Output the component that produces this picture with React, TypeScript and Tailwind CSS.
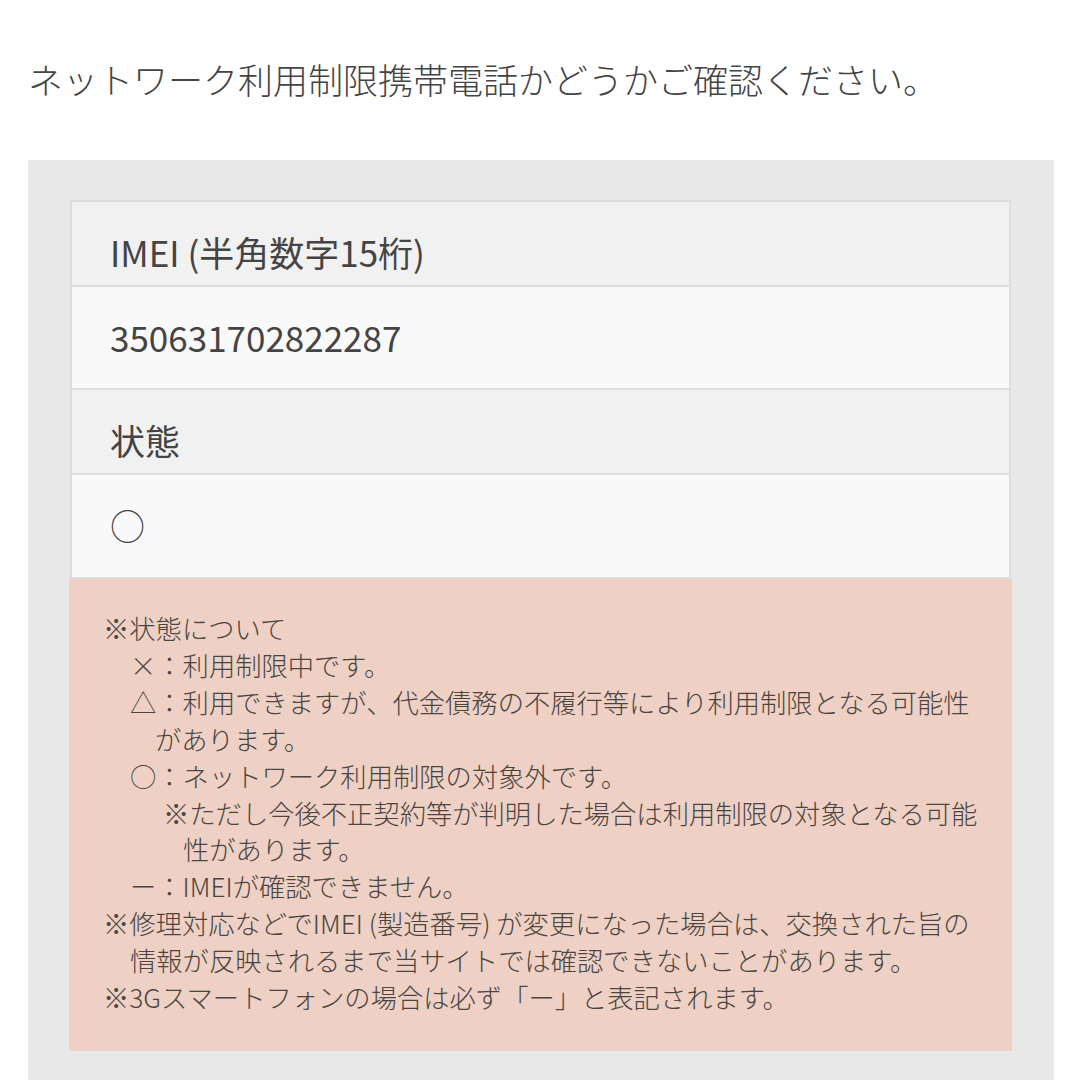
import React from "react";

const font = { fontFamily: '"Noto Sans CJK JP", "Noto Sans", sans-serif' };

function NoteLine({ indent, children }: { indent: string; children: React.ReactNode }) {
  return <div className={`${indent} whitespace-nowrap`}>{children}</div>;
}

export default function App() {
  return (
    <div className="min-h-[1080px] bg-white text-[#444444] font-light" style={font}>
      <div className="pl-[28px] pr-[26px] pt-[54px]">
        <h1 className="text-[35px] leading-[50px] font-light">
          ネットワーク利用制限携帯電話かどうかご確認ください。
        </h1>
        <div className="mt-[56px] bg-[#e8e8e8] pt-[40px] pb-[40px] pl-[41px] pr-[42px]">
          <div className="border-2 border-[#dddddd] border-b-0 mx-[1px] font-normal">
            <div className="h-[85px] bg-[#f1f1f1] border-b-2 border-[#dddddd] pl-[38px] pt-[25px] text-[35px] leading-[50px]">
              IMEI (半角数字15桁)
            </div>
            <div className="h-[103px] bg-[#f9f9f9] border-b-2 border-[#dddddd] pl-[38px] pt-[25px] text-[35px] leading-[50px]">
              350631702822287
            </div>
            <div className="h-[85px] bg-[#f1f1f1] border-b-2 border-[#dddddd] pl-[38px] pt-[25px] text-[35px] leading-[50px]">
              状態
            </div>
            <div className="h-[104px] bg-[#f9f9f9] border-b-2 border-[#dddddd] pl-[38px] pt-[25px] text-[35px] leading-[50px] font-light">
              ○
            </div>
          </div>
          <div className="bg-[#eed1c4] pl-[34px] pt-[31px] pb-[35px] text-[26.3px] leading-[36.9px] text-[#4b4542]">
            <NoteLine indent="pl-0">※状態について</NoteLine>
            <NoteLine indent="pl-[27px]">×：利用制限中です。</NoteLine>
            <NoteLine indent="pl-[27px]">△：利用できますが、代金債務の不履行等により利用制限となる可能性</NoteLine>
            <NoteLine indent="pl-[52px]">があります。</NoteLine>
            <NoteLine indent="pl-[27px]">○：ネットワーク利用制限の対象外です。</NoteLine>
            <NoteLine indent="pl-[60px]">※ただし今後不正契約等が判明した場合は利用制限の対象となる可能</NoteLine>
            <NoteLine indent="pl-[80px]">性があります。</NoteLine>
            <NoteLine indent="pl-[27px]">ー：IMEIが確認できません。</NoteLine>
            <NoteLine indent="pl-0">※修理対応などでIMEI (製造番号) が変更になった場合は、交換された旨の</NoteLine>
            <NoteLine indent="pl-[27px]">情報が反映されるまで当サイトでは確認できないことがあります。</NoteLine>
            <NoteLine indent="pl-0">※3Gスマートフォンの場合は必ず「ー」と表記されます。</NoteLine>
          </div>
        </div>
      </div>
    </div>
  );
}
